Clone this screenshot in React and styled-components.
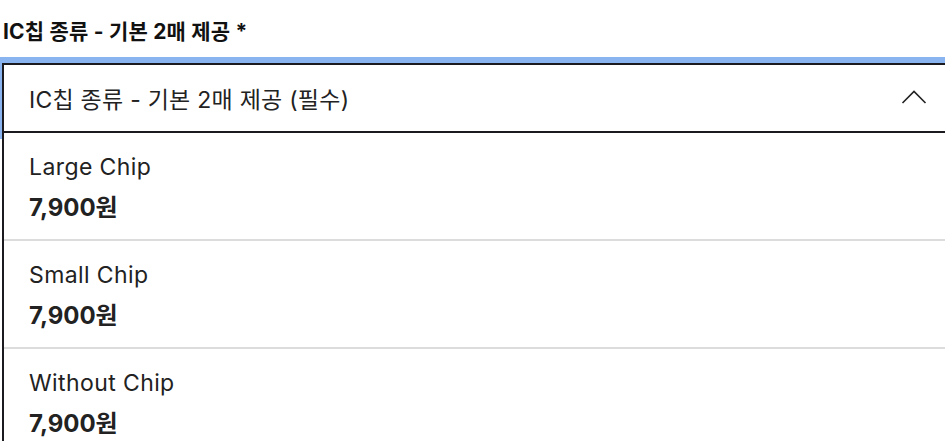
import React from 'react';
import styled, { createGlobalStyle } from 'styled-components';

const GlobalStyle = createGlobalStyle`
  body {
    margin: 0;
    background: #fff;
    font-family: Inter, "Noto Sans CJK KR", sans-serif;
    color: #222;
    overflow: hidden;
  }
`;

const options = [
  { name: 'Large Chip', price: '7,900원' },
  { name: 'Small Chip', price: '7,900원' },
  { name: 'Without Chip', price: '7,900원' },
];

function Chevron() {
  return (
    <svg width="26" height="14" viewBox="0 0 26 14" fill="none">
      <polyline points="1.5,13 13,1.5 24.5,13" stroke="#222" strokeWidth="1.6" />
    </svg>
  );
}

function App() {
  return (
    <>
      <GlobalStyle />
      <Field>
        <Label>IC칩 종류 - 기본 2매 제공 *</Label>
        <Select>
          <Trigger>
            <span>IC칩 종류 - 기본 2매 제공 (필수)</span>
            <Chevron />
          </Trigger>
          <List>
            {options.map((o, i) => (
              <Option key={o.name} last={i === options.length - 1}>
                <Name>{o.name}</Name>
                <Price>{o.price}</Price>
              </Option>
            ))}
          </List>
        </Select>
      </Field>
    </>
  );
}

const Field = styled.div`
  padding: 19px 0 0 2px;
  width: 960px;
`;

const Label = styled.div`
  font-size: 21px;
  font-weight: 700;
  line-height: 26px;
  letter-spacing: 0.2px;
  color: #111;
  padding-left: 1px;
  margin-bottom: 18px;
`;

const Select = styled.div`
  display: flex;
  flex-direction: column;
`;

const Trigger = styled.div`
  display: flex;
  align-items: center;
  justify-content: space-between;
  height: 66px;
  border: 2px solid #1b1b1f;
  box-shadow: 0 0 0 6px #8ab4f0;
  padding: 0 33px 0 25px;
  font-size: 23px;
  letter-spacing: 0.25px;
  color: #222;
  position: relative;
  z-index: 1;
  svg {
    margin-top: -3px;
  }
`;

const List = styled.div`
  border-left: 2px solid #1b1b1f;
  border-right: 2px solid #1b1b1f;
  background: #fff;
  position: relative;
  z-index: 2;
`;

const Option = styled.div`
  display: flex;
  flex-direction: column;
  gap: 13px;
  padding: 20px 25px 17px;
  border-bottom: ${(p) => (p.last ? 'none' : '2px solid #dcdcdc')};
`;

const Name = styled.div`
  font-size: 23px;
  line-height: 28px;
  letter-spacing: 0.4px;
  color: #222;
`;

const Price = styled.div`
  font-size: 24px;
  line-height: 28px;
  font-weight: 700;
  color: #222;
`;

export default App;
